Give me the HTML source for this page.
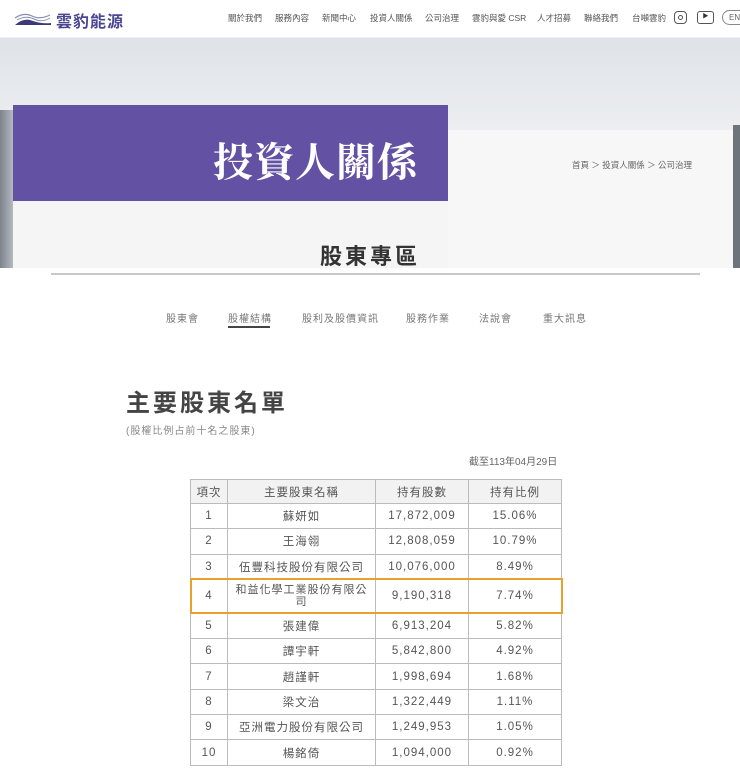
<!DOCTYPE html>
<html><head><meta charset="utf-8"><style>
*{margin:0;padding:0;box-sizing:border-box}
body{width:740px;height:770px;overflow:hidden;background:#fff;font-family:"Liberation Sans","Noto Sans CJK TC",sans-serif;position:relative;color:#555}
.a{position:absolute}
.nav{top:12px;font-size:8.5px;color:#555;white-space:nowrap}
.hero{top:38px;left:0;width:740px;height:230px;background:linear-gradient(180deg,#dfe3e8 0%,#eceef1 40%,#f4f5f7 100%)}
table{position:absolute;left:190px;top:479px;border-collapse:collapse;font-size:11.5px;color:#555}
td{border:1px solid #bbb;text-align:center;height:25.3px;letter-spacing:1px}
tr.h td{background:#f2f2f2;height:24px}
.tabs{top:310px;font-size:10px;color:#777;letter-spacing:1px}
</style></head><body>
<svg class="a" style="left:14px;top:10px" width="38" height="16" viewBox="0 0 38 16"><path d="M1 8 Q10 2 18 6 T36 5" stroke="#8a8fb0" fill="none" stroke-width="1.2"/><path d="M3 10 Q12 5 20 9 T36 8" stroke="#8a8fb0" fill="none" stroke-width="1"/><path d="M1 15 Q10 7 19 11 Q28 14 37 13 L37 15 Z" fill="#3e3a7a"/></svg>
<div class="a" style="left:56px;top:8px;font-size:16px;font-weight:bold;color:#4a4690;letter-spacing:1px">雲豹能源</div>
<div class="a nav" style="left:228px">關於我們</div>
<div class="a nav" style="left:275px">服務內容</div>
<div class="a nav" style="left:322px">新聞中心</div>
<div class="a nav" style="left:370px">投資人關係</div>
<div class="a nav" style="left:425px">公司治理</div>
<div class="a nav" style="left:472px">雲豹與愛 CSR</div>
<div class="a nav" style="left:537px">人才招募</div>
<div class="a nav" style="left:584px">聯絡我們</div>
<div class="a nav" style="left:632px">台噸雲豹</div>
<div class="a" style="left:674px;top:11px;width:13px;height:13px;border:1.5px solid #555;border-radius:4px"><div class="a" style="left:2.5px;top:2.5px;width:5px;height:5px;border:1.3px solid #555;border-radius:50%"></div></div>
<div class="a" style="left:697px;top:11px;width:17px;height:13px;border:1.2px solid #555;border-radius:3px;font-size:6px;text-align:center;line-height:11px;color:#333">▶</div>
<div class="a" style="left:722px;top:10px;width:30px;height:15px;border:1px solid #888;border-radius:8px;font-size:8px;padding-left:6px;line-height:13px;color:#666">EN</div>
<div class="a" style="left:0;top:37px;width:740px;height:2px;background:#eef0f3"></div>
<div class="a hero"></div>
<div class="a" style="left:0;top:110px;width:14px;height:158px;background:linear-gradient(90deg,#7d838b,#b8bdc4)"></div>
<div class="a" style="left:448px;top:130px;width:285px;height:138px;background:#f7f7f8"></div>
<div class="a" style="left:733px;top:125px;width:7px;height:143px;background:#6e747c"></div>
<div class="a" style="left:13px;top:200px;width:435px;height:68px;background:#f5f5f6"></div>
<div class="a" style="left:13px;top:105px;width:435px;height:96px;background:#6352a3"></div>
<div class="a" style="left:213px;top:131px;font-size:40px;color:#fff;font-family:'Noto Serif CJK SC',serif;font-weight:bold;letter-spacing:1px">投資人關係</div>
<div class="a" style="left:572px;top:159px;font-size:8.5px;color:#666">首頁 ＞ 投資人關係 ＞ 公司治理</div>
<div class="a" style="left:320px;top:239px;font-size:22px;color:#333;letter-spacing:3px;font-weight:bold">股東專區</div>
<div class="a" style="left:51px;top:273px;width:649px;height:2px;background:#c8c8c8"></div>
<div class="a tabs" style="left:166px">股東會</div>
<div class="a tabs" style="left:228px">股權結構</div>
<div class="a" style="left:228px;top:326px;width:42px;height:2px;background:#444"></div>
<div class="a tabs" style="left:302px">股利及股價資訊</div>
<div class="a tabs" style="left:406px">股務作業</div>
<div class="a tabs" style="left:479px">法說會</div>
<div class="a tabs" style="left:543px">重大訊息</div>
<div class="a" style="left:126px;top:383px;font-size:24px;color:#444;letter-spacing:3px;font-weight:bold">主要股東名單</div>
<div class="a" style="left:126px;top:422px;font-size:10px;color:#888;letter-spacing:1px">(股權比例占前十名之股東)</div>
<div class="a" style="left:469px;top:453px;font-size:10px;color:#666">截至113年04月29日</div>
<table>
<colgroup><col style="width:37px"><col style="width:148px"><col style="width:93px"><col style="width:93px"></colgroup>
<tr class="h"><td>項次</td><td>主要股東名稱</td><td>持有股數</td><td>持有比例</td></tr>
<tr><td>1</td><td>蘇妍如</td><td>17,872,009</td><td>15.06%</td></tr>
<tr><td>2</td><td>王海翎</td><td>12,808,059</td><td>10.79%</td></tr>
<tr><td>3</td><td>伍豐科技股份有限公司</td><td>10,076,000</td><td>8.49%</td></tr>
<tr style="outline:2px solid #e8a22c;outline-offset:-1px"><td style="height:34px">4</td><td style="line-height:12px;font-size:11px">和益化學工業股份有限公<br>司</td><td>9,190,318</td><td>7.74%</td></tr>
<tr><td>5</td><td>張建偉</td><td>6,913,204</td><td>5.82%</td></tr>
<tr><td>6</td><td>譚宇軒</td><td>5,842,800</td><td>4.92%</td></tr>
<tr><td>7</td><td>趙謹軒</td><td>1,998,694</td><td>1.68%</td></tr>
<tr><td>8</td><td>梁文治</td><td>1,322,449</td><td>1.11%</td></tr>
<tr><td>9</td><td>亞洲電力股份有限公司</td><td>1,249,953</td><td>1.05%</td></tr>
<tr><td>10</td><td>楊銘倚</td><td>1,094,000</td><td>0.92%</td></tr>
</table>
</body></html>
